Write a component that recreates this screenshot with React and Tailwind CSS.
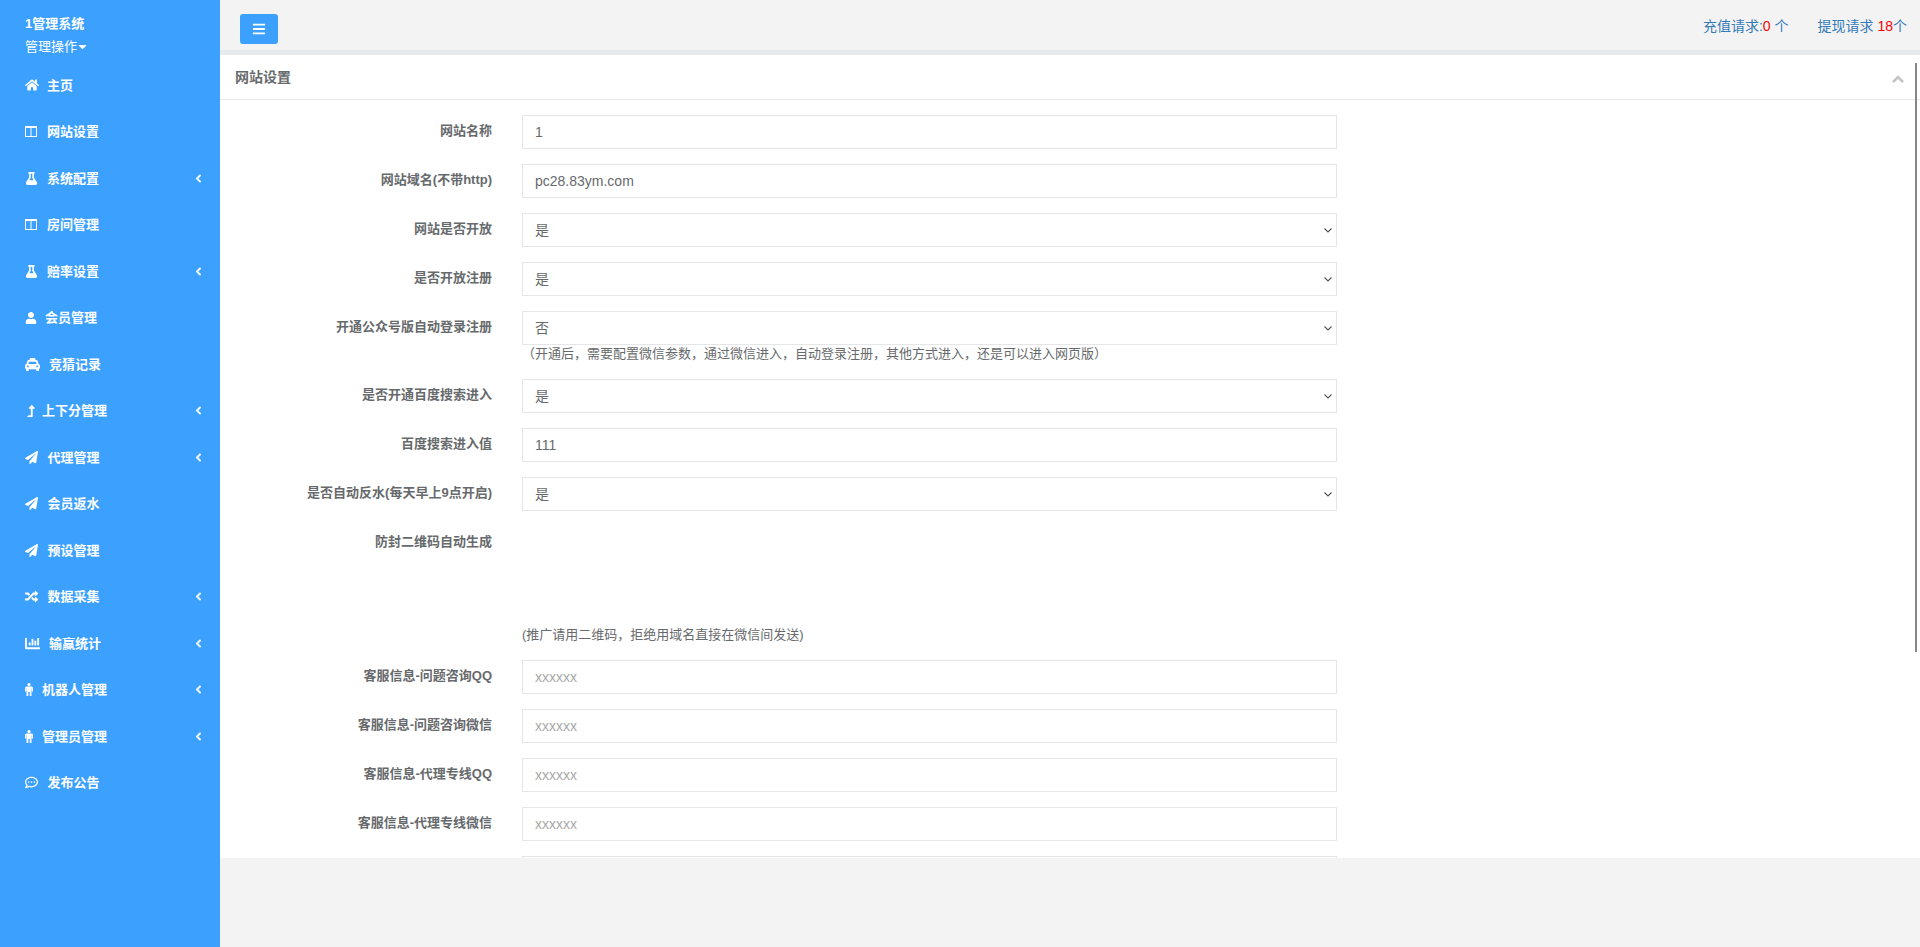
import React from "react";
import { FaHome, FaFlask, FaUser, FaTaxi, FaLevelUpAlt, FaPaperPlane, FaRandom, FaChartBar, FaRegCommentDots, FaAngleLeft, FaBars, FaCaretDown } from "react-icons/fa";

const ColumnsIcon = () => (
  <svg width="12" height="11" viewBox="0 0 12 11" fill="none" stroke="currentColor">
    <rect x="0.5" y="0.5" width="11" height="10" />
    <path d="M0 1.5h12M6 1v10" />
  </svg>
);

const MaleIcon = () => (
  <svg width="8" height="13" viewBox="0 0 8 13" fill="currentColor">
    <circle cx="4" cy="1.6" r="1.6" />
    <path d="M1.5 3.5h5A1.5 1.5 0 0 1 8 5v3.5H6.8v-3h-.3V13H4.7V9H3.3v4H1.5V5.5h-.3v3H0V5a1.5 1.5 0 0 1 1.5-1.5z" />
  </svg>
);

const nav = [
  { t: "主页", I: FaHome, w: "w-[22px]", s: 14 },
  { t: "网站设置", I: ColumnsIcon, w: "w-[22px]" },
  { t: "系统配置", I: FaFlask, w: "w-[22px]", s: 13, sub: true },
  { t: "房间管理", I: ColumnsIcon, w: "w-[22px]" },
  { t: "赔率设置", I: FaFlask, w: "w-[22px]", s: 13, sub: true },
  { t: "会员管理", I: FaUser, w: "w-[20px]", s: 12 },
  { t: "竞猜记录", I: FaTaxi, w: "w-[24px]", s: 15 },
  { t: "上下分管理", I: FaLevelUpAlt, w: "w-[17px]", s: 12, sub: true },
  { t: "代理管理", I: FaPaperPlane, w: "w-[22.5px]", s: 13, sub: true },
  { t: "会员返水", I: FaPaperPlane, w: "w-[22.5px]", s: 13 },
  { t: "预设管理", I: FaPaperPlane, w: "w-[22.5px]", s: 13 },
  { t: "数据采集", I: FaRandom, w: "w-[22.5px]", s: 13, sub: true },
  { t: "输赢统计", I: FaChartBar, w: "w-[24px]", s: 15, sub: true },
  { t: "机器人管理", I: MaleIcon, w: "w-[17px]", sub: true },
  { t: "管理员管理", I: MaleIcon, w: "w-[17px]", sub: true },
  { t: "发布公告", I: FaRegCommentDots, w: "w-[22.5px]", s: 13 },
];

const inputCls = "block w-[815px] h-[34px] border border-[#e5e6e7] bg-white px-3 text-[14px] text-[#676a6c] outline-none placeholder:text-[#a9a9a9]";

function Row({ label, children }) {
  return (
    <div className="flex mb-[15px]">
      <label className="w-[272px] shrink-0 pt-[7px] text-right text-[13px] leading-[18.5px] font-bold text-[#676a6c]">{label}</label>
      <div className="ml-[30px] w-[815px]">{children}</div>
    </div>
  );
}

const Text = ({ value, placeholder }) => <input className={inputCls} defaultValue={value} placeholder={placeholder} />;

const Select = ({ value }) => (
  <div className="relative">
    <select className={`${inputCls} appearance-none`} defaultValue={value}>
      <option value="是">是</option>
      <option value="否">否</option>
    </select>
    <svg className="pointer-events-none absolute right-[5px] top-[15px]" width="8" height="5" viewBox="0 0 8 5" fill="none" stroke="#555" strokeWidth="1.1">
      <path d="M0.5 0.5L4 4L7.5 0.5" />
    </svg>
  </div>
);

export default function App() {
  return (
    <div className="flex h-screen overflow-hidden bg-[#f3f3f4] text-[13px] text-[#676a6c] font-['Liberation_Sans','Noto_Sans_CJK_SC',sans-serif]">
      <aside className="w-[220px] shrink-0 bg-[#3ca0ff] text-white">
        <div className="h-[62px] pl-[25px] pt-[15px]">
          <div className="text-[13px] leading-[18.5px] font-bold">1管理系统</div>
          <div className="mt-[4px] flex items-center text-[13px] leading-[18.5px]">管理操作<FaCaretDown size={13} className="-ml-[1px]" /></div>
        </div>
        <nav>
          {nav.map(({ t, I, w, s, sub }) => (
            <div key={t + w} className="flex h-[46.53px] items-center pl-[25px] pr-[15.5px] text-[13px] font-bold">
              <span className={`${w} shrink-0`}><I size={s} /></span>
              <span className="flex-1">{t}</span>
              {sub && <FaAngleLeft size={13} className="opacity-90" />}
            </div>
          ))}
        </nav>
      </aside>

      <main className="flex min-w-0 flex-1 flex-col">
        <header className="flex h-[50px] shrink-0 items-start justify-between">
          <button className="mt-[14px] ml-[20px] flex h-[30px] w-[38px] items-center justify-center rounded-[3px] bg-[#3ca0ff] text-white">
            <FaBars size={14} />
          </button>
          <div className="flex pt-[16px] pr-[13px] text-[14px] leading-[20px] text-[#337ab7]">
            <span>充值请求:<span className="text-[#ff0000]">0</span> 个</span>
            <span className="ml-[29px]">提现请求 <span className="text-[#ff0000]">18</span>个</span>
          </div>
        </header>
        <div className="h-[5px] shrink-0 bg-[#e7eaec]" />

        <section className="relative h-[803px] shrink-0 overflow-hidden bg-white">
          <div className="flex h-[45px] items-center justify-between border-b border-[#e7eaec] pl-[15px] pr-[16px]">
            <h5 className="text-[14px] font-bold text-[#676a6c]">网站设置</h5>
            <svg className="mt-[3px]" width="12" height="8" viewBox="0 0 12 8" fill="none" stroke="#c4c4c4" strokeWidth="2.6">
              <path d="M1 7L6 2L11 7" />
            </svg>
          </div>
          <form className="pt-[15px]">
            <Row label="网站名称"><Text value="1" /></Row>
            <Row label="网站域名(不带http)"><Text value="pc28.83ym.com" /></Row>
            <Row label="网站是否开放"><Select value="是" /></Row>
            <Row label="是否开放注册"><Select value="是" /></Row>
            <div className="flex h-[68px]">
              <label className="w-[272px] shrink-0 pt-[7px] text-right text-[13px] leading-[18.5px] font-bold text-[#676a6c]">开通公众号版自动登录注册</label>
              <div className="ml-[30px] w-[815px]">
                <Select value="否" />
                <p className="text-[13px] leading-[18.5px] text-[#676a6c]">（开通后，需要配置微信参数，通过微信进入，自动登录注册，其他方式进入，还是可以进入网页版）</p>
              </div>
            </div>
            <Row label="是否开通百度搜索进入"><Select value="是" /></Row>
            <Row label="百度搜索进入值"><Text value="111" /></Row>
            <Row label="是否自动反水(每天早上9点开启)"><Select value="是" /></Row>
            <Row label="防封二维码自动生成">
              <div className="h-[100px]" />
              <p className="text-[13px] leading-[18.5px] text-[#676a6c]">(推广请用二维码，拒绝用域名直接在微信间发送)</p>
            </Row>
            <Row label="客服信息-问题咨询QQ"><Text placeholder="xxxxxx" /></Row>
            <Row label="客服信息-问题咨询微信"><Text placeholder="xxxxxx" /></Row>
            <Row label="客服信息-代理专线QQ"><Text placeholder="xxxxxx" /></Row>
            <Row label="客服信息-代理专线微信"><Text placeholder="xxxxxx" /></Row>
            <Row label=""><Text /></Row>
          </form>
          <div className="absolute right-[3px] top-[8px] h-[589px] w-[2px] bg-[#858585]" />
        </section>
      </main>
    </div>
  );
}
